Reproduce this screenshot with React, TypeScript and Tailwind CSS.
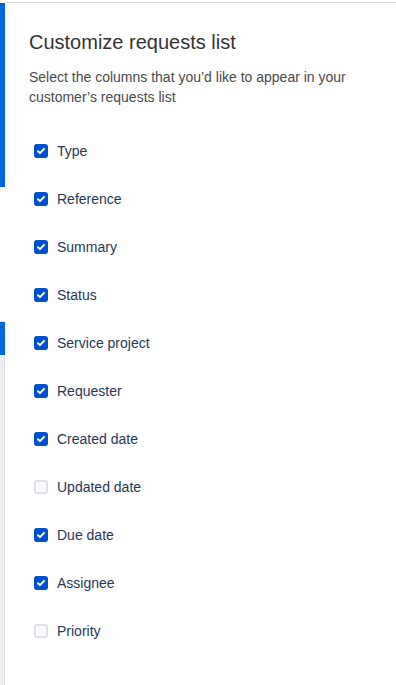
const columns = [
  { label: "Type", checked: true },
  { label: "Reference", checked: true },
  { label: "Summary", checked: true },
  { label: "Status", checked: true },
  { label: "Service project", checked: true },
  { label: "Requester", checked: true },
  { label: "Created date", checked: true },
  { label: "Updated date", checked: false },
  { label: "Due date", checked: true },
  { label: "Assignee", checked: true },
  { label: "Priority", checked: false },
];

function Checkbox({ checked }: { checked: boolean }) {
  if (!checked) {
    return <span className="block w-[14px] h-[14px] rounded-[3px] border-2 border-[#dfe1e6] bg-[#fafbfc]" />;
  }
  return (
    <span className="flex items-center justify-center w-[14px] h-[14px] rounded-[3px] bg-[#0052cc]">
      <svg width="14" height="14" viewBox="0 0 14 14" fill="none">
        <path d="M4 7.2 L6 9.1 L10 5" stroke="white" strokeWidth="2" strokeLinecap="round" strokeLinejoin="round" />
      </svg>
    </span>
  );
}

export default function App() {
  return (
    <div className="min-h-[685px] bg-white pt-[2px] font-['Liberation_Sans',Arial,sans-serif] flex flex-col">
      <div className="flex flex-1">
        {/* sidebar edge showing behind the panel */}
        <div className="w-[5px] flex flex-col shrink-0 pt-[1px]">
          <div className="h-[184px] bg-[#0066dd]" />
          <div className="h-[135px] bg-white border-b border-[#e4e6ea]" />
          <div className="h-[33px] bg-[#0066dd]" />
          <div className="flex-1 bg-[#eceef1] border-r border-[#dcdfe4]" />
        </div>

        {/* panel */}
        <div className="flex-1 border-t border-[#dddddd] pl-[24px] pr-4">
          <h2 className="mt-[27px] text-[20px] leading-[24px] text-[#333333] font-normal">
            Customize requests list
          </h2>
          <p className="mt-[13px] text-[14px] leading-[20px] text-[#4a4a4a] max-w-[330px]">
            Select the columns that you’d like to appear in your customer’s requests list
          </p>

          <ul className="mt-[20px] flex flex-col">
            {columns.map((col) => (
              <li key={col.label} className="h-12 flex items-center gap-[9px] pl-[5px]">
                <Checkbox checked={col.checked} />
                <span className="text-[14px] leading-[20px] text-[#253858]">{col.label}</span>
              </li>
            ))}
          </ul>
        </div>
      </div>
    </div>
  );
}
